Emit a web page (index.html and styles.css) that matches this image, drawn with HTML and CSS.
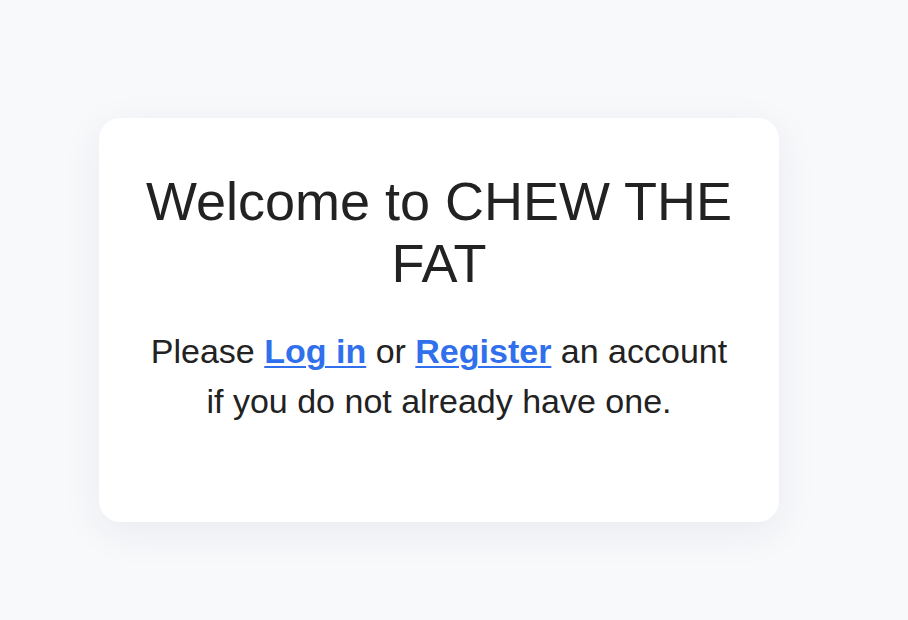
FILE: index.html
```html
<!DOCTYPE html>
<html lang="en">
<head>
<meta charset="utf-8">
<title>Chew the Fat</title>
<link rel="stylesheet" href="styles.css">
</head>
<body>
<main class="page">
  <section class="card">
    <h1 class="title">Welcome to CHEW THE FAT</h1>
    <p class="lead">Please <a class="link" href="#">Log in</a> or <a class="link" href="#">Register</a> an account if you do not already have one.</p>
  </section>
</main>
</body>
</html>
```
FILE: styles.css
```css
html, body {
  margin: 0;
  padding: 0;
  background: #f8f9fb;
}
body {
  font-family: "Liberation Sans", Arial, Helvetica, sans-serif;
  color: #222222;
}
.page {
  box-sizing: border-box;
  min-height: 620px;
  padding: 118px 0 60px 99px;
}
.card {
  box-sizing: border-box;
  width: 680px;
  height: 404px;
  padding: 52px 45px 0;
  background: #ffffff;
  border-radius: 21px;
  box-shadow: 0 10px 40px rgba(30, 40, 70, 0.07);
  text-align: center;
}
.title {
  margin: 0;
  font-size: 54px;
  font-weight: 400;
  line-height: 62px;
  color: #222222;
}
.lead {
  margin: 32px 0 0;
  font-size: 34px;
  line-height: 50px;
  color: #222222;
}
.link {
  color: #3170ec;
  font-weight: 700;
  text-decoration: underline;
  text-decoration-thickness: 2px;
  text-underline-offset: 3px;
}
```
